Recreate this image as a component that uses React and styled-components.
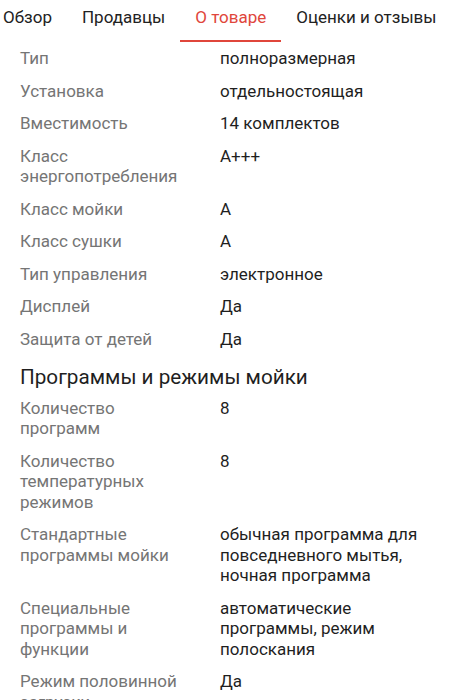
import React from 'react'
import styled, { createGlobalStyle } from 'styled-components'

const GlobalStyle = createGlobalStyle`
  html, body {
    margin: 0;
    padding: 0;
    background: #fff;
  }
  body {
    font-family: Roboto, "Noto Sans", "Liberation Sans", sans-serif;
    -webkit-font-smoothing: antialiased;
  }
`

const tabs = ['Обзор', 'Продавцы', 'О товаре', 'Оценки и отзывы']

const general = [
  ['Тип', 'полноразмерная'],
  ['Установка', 'отдельностоящая'],
  ['Вместимость', '14 комплектов'],
  ['Класс энергопотребления', 'A+++'],
  ['Класс мойки', 'A'],
  ['Класс сушки', 'A'],
  ['Тип управления', 'электронное'],
  ['Дисплей', 'Да'],
  ['Защита от детей', 'Да'],
]

const programs = [
  ['Количество программ', '8'],
  ['Количество температурных режимов', '8'],
  [
    'Стандартные программы мойки',
    'обычная программа для повседневного мытья, ночная программа',
  ],
  [
    'Специальные программы и функции',
    'автоматические программы, режим полоскания',
  ],
  ['Режим половинной загрузки', 'Да'],
]

export default function App() {
  return (
    <Page>
      <GlobalStyle />
      <TabBar>
        <TabStrip>
          {tabs.map((t) => (
            <Tab key={t} active={t === 'О товаре'}>
              {t}
            </Tab>
          ))}
        </TabStrip>
      </TabBar>
      <Specs>
        {general.map(([k, v]) => (
          <Row key={k}>
            <Label>{k}</Label>
            <Value>{v}</Value>
          </Row>
        ))}
        <SectionTitle>Программы и режимы мойки</SectionTitle>
        {programs.map(([k, v]) => (
          <Row key={k}>
            <Label>{k}</Label>
            <Value>{v}</Value>
          </Row>
        ))}
      </Specs>
    </Page>
  )
}

const Page = styled.div`
  width: 459px;
  height: 700px;
  overflow: hidden;
  background: #fff;
`

const TabBar = styled.nav`
  height: 42px;
  overflow: hidden;
`

const TabStrip = styled.div`
  display: flex;
  margin-left: -12px;
  height: 100%;
  white-space: nowrap;
`

const Tab = styled.div`
  display: flex;
  align-items: center;
  height: 100%;
  box-sizing: border-box;
  padding: 0 15px 6px;
  font-size: 17px;
  color: ${(props) => (props.active ? '#e0463b' : '#222')};
  border-bottom: 2px solid
    ${(props) => (props.active ? '#e0463b' : 'transparent')};
`

const Specs = styled.div`
  padding: 0 20px;
`

const Row = styled.div`
  display: grid;
  grid-template-columns: 170px 1fr;
  column-gap: 30px;
  padding: 6px 0;
  font-size: 17px;
  line-height: 20.5px;
`

const Label = styled.div`
  color: #757575;
`

const Value = styled.div`
  color: #1f1f1f;
`

const SectionTitle = styled.h2`
  margin: 7.5px 0 1px;
  font-size: 20.7px;
  line-height: 28px;
  font-weight: 400;
  color: #1f1f1f;
`
